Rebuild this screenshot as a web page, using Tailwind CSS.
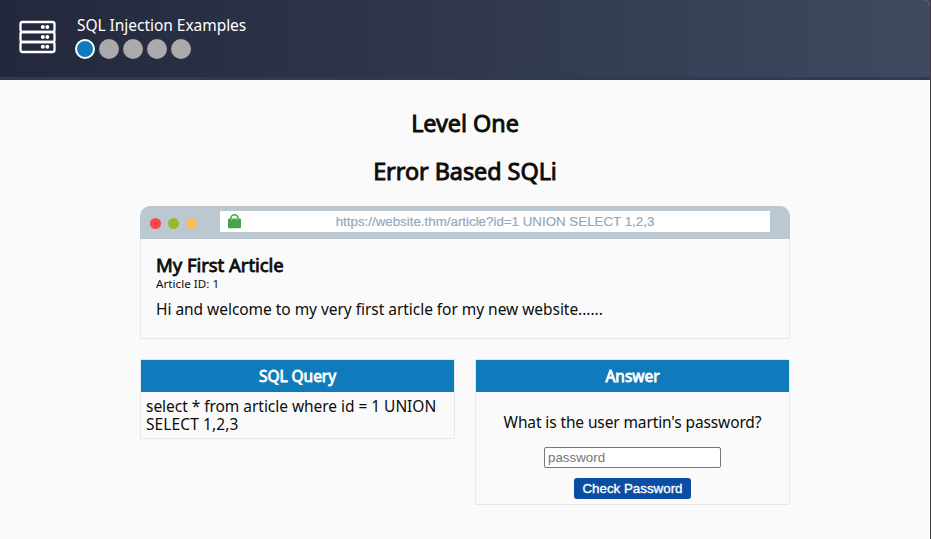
<!DOCTYPE html>
<html lang="en">
<head>
<meta charset="utf-8">
<title>SQL Injection Examples</title>
<script src="https://cdn.jsdelivr.net/npm/@tailwindcss/browser@4"></script>
</head>
<body class="h-[539px] overflow-hidden bg-[#3c3c3c] font-['Noto_Sans',sans-serif] text-[15.5px] leading-[18px] tracking-[-0.04px] text-[#0c0c0c]">
<div class="h-full w-[930px] overflow-hidden rounded-tr-[6px] bg-[#fafafa]">
  <header class="flex h-20 border-b-[3px] border-[#2e3b52] bg-linear-to-r from-[#23283c] to-[#3f4960] pl-[19px]">
    <svg class="mt-5 h-[34px] w-[37px] shrink-0" viewBox="0 0 37 34" fill="none" stroke="#fff" stroke-width="2.300">
      <rect x="1.500" y="2" width="34" height="10" rx="2"/>
      <rect x="1.500" y="12" width="34" height="10" rx="2"/>
      <rect x="1.500" y="22" width="34" height="10" rx="2"/>
      <g fill="#fff" stroke="none">
        <circle cx="23.800" cy="7" r="2"/><circle cx="28.300" cy="7" r="2"/>
        <circle cx="23.800" cy="17" r="2"/><circle cx="28.300" cy="17" r="2"/>
        <circle cx="23.800" cy="26.800" r="2"/><circle cx="28.300" cy="26.800" r="2"/>
      </g>
    </svg>
    <div class="ml-[19px] pt-4">
      <div class="ml-0.5 whitespace-nowrap text-white"><span>SQL Injection Examples</span></div>
      <div class="mt-[5px] flex gap-1">
        <i class="size-5 rounded-full border-2 border-white bg-[#107bbc]"></i>
        <i class="size-5 rounded-full bg-[#aaa]"></i>
        <i class="size-5 rounded-full bg-[#aaa]"></i>
        <i class="size-5 rounded-full bg-[#aaa]"></i>
        <i class="size-5 rounded-full bg-[#aaa]"></i>
      </div>
    </div>
  </header>
  <main class="mx-auto w-[650px] pt-[29px]">
    <h1 class="text-center text-[23.4px] leading-7 [-webkit-text-stroke:0.9px_#0c0c0c]"><span>Level One</span></h1>
    <h1 class="mt-5 text-center text-[23.4px] leading-7 [-webkit-text-stroke:0.9px_#0c0c0c]"><span>Error Based SQLi</span></h1>
    <section class="mt-[21px] h-[133px] rounded-t-[10px]">
      <div class="flex h-[33px] rounded-t-[10px] bg-[#bbc7d1] pl-[10px]">
        <div class="flex gap-[7px] pt-3">
          <i class="size-[11px] rounded-full bg-[#ff4445]"></i>
          <i class="size-[11px] rounded-full bg-[#95bb2c]"></i>
          <i class="size-[11px] rounded-full bg-[#ffbb50]"></i>
        </div>
        <div class="mt-[5px] ml-[23px] flex h-[21px] w-[550px] bg-white pl-2">
          <svg class="mt-[3px] h-[15px] w-[13px] shrink-0" viewBox="0 0 13 15"><path d="M1 4.500h11q1 0 1 1V13q0 1.200-1.200 1.200H1.200Q0 14.200 0 13V5.500q0-1 1-1Z" fill="#46a34b"/><path d="M3 5.500V4.200a3.500 3.400 0 0 1 7 0v1.300" fill="none" stroke="#46a34b" stroke-width="1.500"/><path d="M3.200 5.300a.6.600 0 0 0 1.200 0M8.600 5.300a.6.600 0 0 0 1.200 0" fill="#fff"/></svg>
          <div class="flex-1 pr-[21px] text-center font-['Liberation_Sans',sans-serif] text-[13.33px] leading-[21px] tracking-normal text-[#94a8be] [-webkit-text-stroke:0.2px_#94a8be]"><span>https://website.thm/article?id=1 UNION SELECT 1,2,3</span></div>
        </div>
      </div>
      <div class="h-[100px] border border-t-0 border-[#e7e7e7] px-[15px] pt-[15px]">
        <h2 class="text-[18.5px] leading-[22px] [-webkit-text-stroke:0.8px_#0c0c0c]"><span>My First Article</span></h2>
        <div class="mt-px text-[11.6px] leading-[14px] tracking-[0.04px]"><span>Article ID: 1</span></div>
        <p class="mt-[9px]"><span>Hi and welcome to my very first article for my new website......</span></p>
      </div>
    </section>
    <div class="mt-5 flex items-start gap-5">
      <section class="w-[315px] border border-[#e7e7e7]">
        <h3 class="h-8 bg-[#107bbc] text-center leading-[33px] text-white [-webkit-text-stroke:0.8px_#fff]"><span>SQL Query</span></h3>
        <p class="h-[46px] pt-[5px] pl-[5px]"><span>select * from article where id = 1 UNION</span><br><span class="tracking-[0.1px]">SELECT 1,2,3</span></p>
      </section>
      <section class="h-[146px] w-[315px] border border-[#e7e7e7] text-center">
        <h3 class="h-8 bg-[#107bbc] leading-[33px] text-white [-webkit-text-stroke:0.8px_#fff]"><span>Answer</span></h3>
        <p class="mt-[21px] tracking-[-0.12px]"><span>What is the user martin's password?</span></p>
        <input class="mx-auto mt-4 block h-[21px] w-[177px] rounded-[2px] border border-[#767676] bg-white px-[3px] font-['Liberation_Sans',sans-serif] text-[13.33px] tracking-normal placeholder-[#757575]" placeholder="password">
        <button class="mx-auto mt-[10px] block h-[21px] w-[117px] rounded-[3px] bg-[#0b4da2] font-['Liberation_Sans',sans-serif] text-[13.33px] leading-[21px] tracking-normal text-white [-webkit-text-stroke:0.35px_#fff]"><span>Check Password</span></button>
      </section>
    </div>
  </main>
</div>
</body>
</html>
